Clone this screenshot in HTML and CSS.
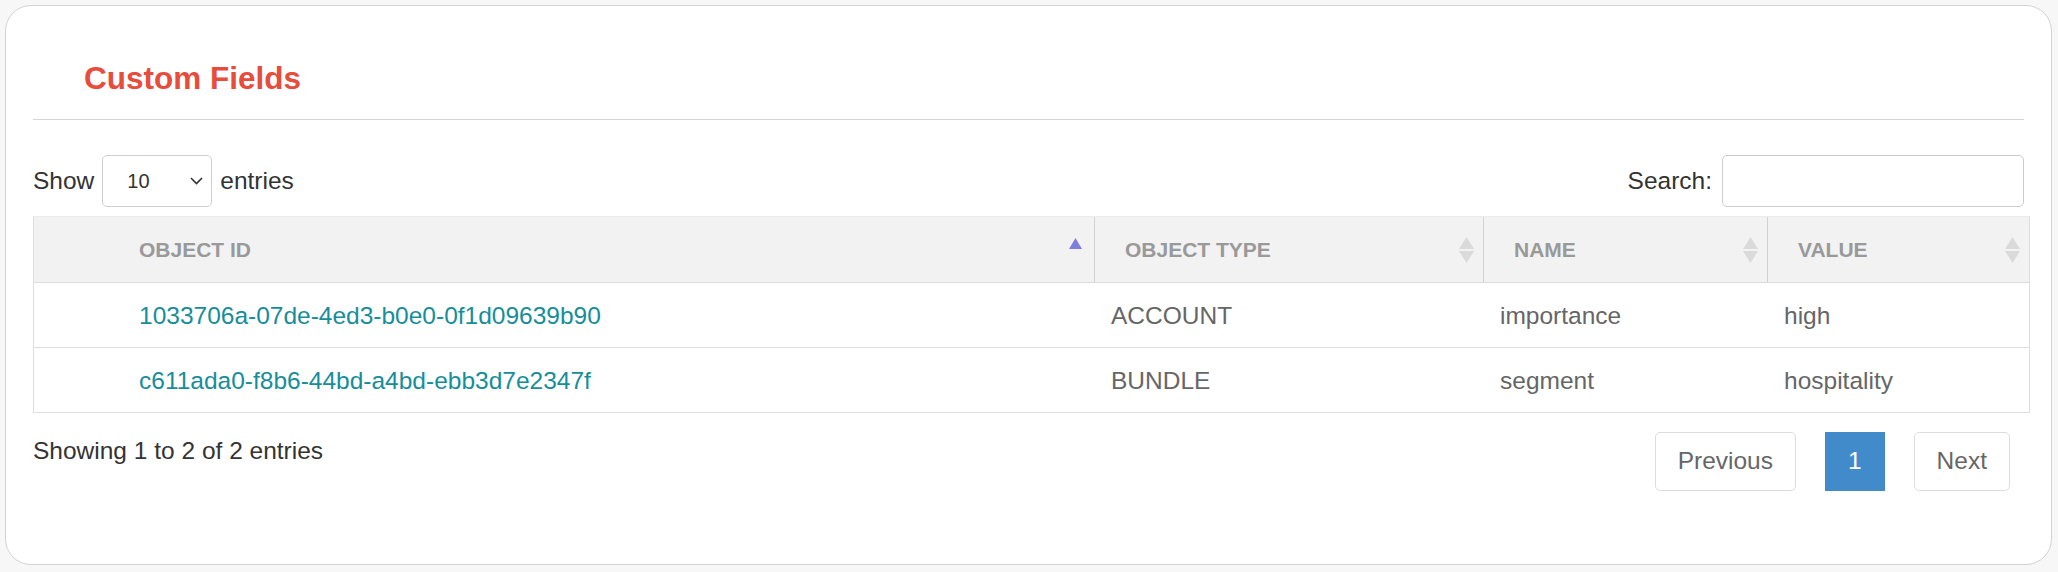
FILE: index.html
```html
<!DOCTYPE html>
<html lang="en">
<head>
<meta charset="utf-8">
<title>Custom Fields</title>
<link rel="stylesheet" href="styles.css">
</head>
<body>
<div class="card">
  <h2 class="card-title">Custom Fields</h2>
  <hr class="divider">
  <div class="dt-top">
    <div class="length">
      <span>Show</span>
      <div class="select">
        <span class="select-value">10</span>
        <svg class="chevron" width="13" height="8" viewBox="0 0 13 8"><path d="M1 1 L6.5 6.5 L12 1" fill="none" stroke="#333" stroke-width="1.6"/></svg>
      </div>
      <span>entries</span>
    </div>
    <div class="search">
      <label for="q">Search:</label>
      <input id="q" class="search-input" type="text">
    </div>
  </div>
  <table class="dt">
    <thead>
      <tr>
        <th class="col-id"><div class="th-inner"><span>Object ID</span>
          <svg class="sort" width="15" height="26" viewBox="0 0 15 26"><polygon points="7.5,1 14,12 1,12" fill="#7e7ee0"/></svg></div></th>
        <th class="col-type"><div class="th-inner"><span>Object Type</span>
          <svg class="sort" width="15" height="26" viewBox="0 0 15 26"><polygon points="7.5,0 15,12 0,12" fill="#dadada"/><polygon points="0,14 15,14 7.5,26" fill="#dadada"/></svg></div></th>
        <th class="col-name"><div class="th-inner"><span>Name</span>
          <svg class="sort" width="15" height="26" viewBox="0 0 15 26"><polygon points="7.5,0 15,12 0,12" fill="#dadada"/><polygon points="0,14 15,14 7.5,26" fill="#dadada"/></svg></div></th>
        <th class="col-value"><div class="th-inner"><span>Value</span>
          <svg class="sort" width="15" height="26" viewBox="0 0 15 26"><polygon points="7.5,0 15,12 0,12" fill="#dadada"/><polygon points="0,14 15,14 7.5,26" fill="#dadada"/></svg></div></th>
      </tr>
    </thead>
    <tbody>
      <tr>
        <td class="col-id"><a href="#">1033706a-07de-4ed3-b0e0-0f1d09639b90</a></td>
        <td>ACCOUNT</td>
        <td>importance</td>
        <td>high</td>
      </tr>
      <tr>
        <td class="col-id"><a href="#">c611ada0-f8b6-44bd-a4bd-ebb3d7e2347f</a></td>
        <td>BUNDLE</td>
        <td>segment</td>
        <td>hospitality</td>
      </tr>
    </tbody>
  </table>
  <div class="dt-footer">
    <div class="info">Showing 1 to 2 of 2 entries</div>
    <div class="pagination">
      <a class="page-btn" href="#">Previous</a>
      <a class="page-btn active" href="#">1</a>
      <a class="page-btn" href="#">Next</a>
    </div>
  </div>
</div>
</body>
</html>
```
FILE: styles.css
```css
* { box-sizing: border-box; }

body {
  margin: 0;
  background: #f7f7f7;
  font-family: "Liberation Sans", Arial, sans-serif;
  color: #333;
}

.card {
  margin: 5px 6px 7px 5px;
  background: #fff;
  border: 1px solid #d3d3d3;
  border-radius: 26px;
  padding: 54px 27px 73px 27px;
}

.card-title {
  margin: 0;
  padding-left: 51px;
  font-size: 31.5px;
  line-height: 36px;
  font-weight: bold;
  color: #e74c3c;
}

.divider {
  margin: 23px 0 0;
  border: 0;
  border-top: 1px solid #d5d5d5;
  height: 0;
}

.dt-top {
  margin-top: 35px;
  height: 52px;
  display: flex;
  justify-content: space-between;
  align-items: center;
  font-size: 24.5px;
  color: #333;
}

.length {
  display: flex;
  align-items: center;
  gap: 8px;
}

.select {
  width: 110px;
  height: 52px;
  border: 1px solid #cfcfcf;
  border-radius: 5px;
  display: flex;
  align-items: center;
  justify-content: space-between;
  padding: 0 8px 0 24px;
  font-size: 20px;
  color: #333;
}

.chevron { display: block; }

.search {
  display: flex;
  align-items: center;
  gap: 10px;
}

.search-input {
  width: 302px;
  height: 52px;
  border: 1px solid #cccccc;
  border-radius: 5px;
  font-size: 24px;
  font-family: inherit;
  padding: 0 10px;
  outline: none;
}

.dt {
  margin-top: 9px;
  width: calc(100% + 6px);
  border-collapse: separate;
  border-spacing: 0;
  table-layout: fixed;
  border-top: 1px solid #ececec;
  border-left: 1px solid #dedede;
  border-right: 1px solid #dedede;
}

.dt th {
  background: #f2f2f2;
  padding: 20px 9px 19px 30px;
  border-bottom: 1px solid #dcdcdc;
  text-align: left;
  font-size: 21px;
  font-weight: bold;
  color: #999;
  text-transform: uppercase;
}

.dt th + th { border-left: 1px solid #d2d2d2; }

.th-inner {
  height: 26px;
  line-height: 26px;
  display: flex;
  align-items: center;
  justify-content: space-between;
}

.sort { display: block; flex: none; }

.dt th.col-id { width: 1060px; padding-left: 105px; padding-right: 11px; }
.dt th.col-type { width: 389px; }
.dt th.col-name { width: 284px; }

.dt td {
  padding: 19px 17px 17px 17px;
  line-height: 28px;
  font-size: 24.5px;
  color: #666;
  border-bottom: 1px solid #dedede;
  white-space: nowrap;
}

.dt td.col-id { padding-left: 105px; }

.dt td a {
  color: #168e9a;
  text-decoration: none;
}

.dt-footer {
  margin-top: 19px;
  display: flex;
  justify-content: space-between;
  align-items: flex-start;
}

.info {
  padding-top: 5px;
  font-size: 24.5px;
  color: #333;
}

.pagination {
  display: flex;
  gap: 29px;
  margin-right: 14px;
}

.page-btn {
  display: block;
  padding: 14px 22px 15px;
  line-height: 28px;
  font-size: 24.5px;
  color: #666;
  text-decoration: none;
  border: 1px solid #dddddd;
  border-radius: 5px;
}

.page-btn.active {
  background: #428bca;
  border-color: #428bca;
  color: #fff;
  border-radius: 0;
}
```
